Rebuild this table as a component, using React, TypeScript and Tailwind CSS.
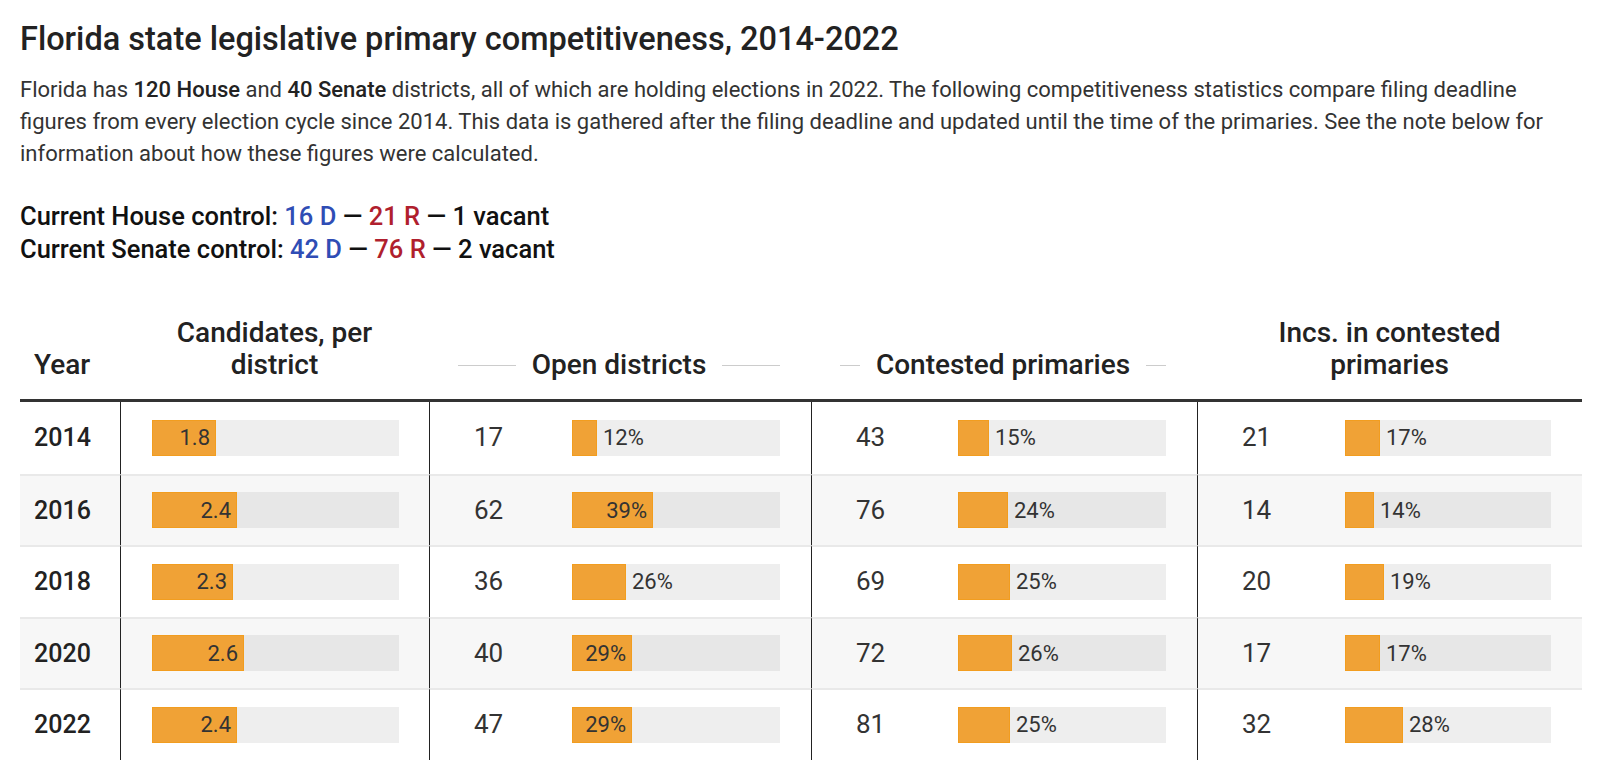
import React from "react";

type Pair = [number, number];

const years = [2014, 2016, 2018, 2020, 2022];
const cand = [1.8, 2.4, 2.3, 2.6, 2.4];
const open: Pair[] = [[17, 12], [62, 39], [36, 26], [40, 29], [47, 29]];
const contested: Pair[] = [[43, 15], [76, 24], [69, 25], [72, 26], [81, 25]];
const incs: Pair[] = [[21, 17], [14, 14], [20, 19], [17, 17], [32, 28]];

const FONT = { fontFamily: "Roboto, 'Liberation Sans', sans-serif" };

function Bar({ frac, label, track, shaded }: { frac: number; label: string; track: number; shaded: boolean }) {
  const w = Math.round(frac * track);
  const inside = w >= 60;
  return (
    <div
      className={`flex items-center h-[36px] shrink-0 ${shaded ? "bg-[#e7e7e7]" : "bg-[#eeeeee]"}`}
      style={{ width: track }}
    >
      <div
        className="h-full bg-[#f0a236] border border-[#f29d1f] flex items-center justify-end pr-[5px] shrink-0"
        style={{ width: w }}
      >
        {inside && <span className="text-[22px] text-[#333]">{label}</span>}
      </div>
      {!inside && <span className="ml-[6px] text-[22px] text-[#333]">{label}</span>}
    </div>
  );
}

function NumBar({ p, track, shaded }: { p: Pair; track: number; shaded: boolean }) {
  return (
    <div className="flex items-center justify-between h-full pl-[44px] pr-[31px]">
      <span className="text-[26px] text-[#333]">{p[0]}</span>
      <Bar frac={p[1] / 100} label={`${p[1]}%`} track={track} shaded={shaded} />
    </div>
  );
}

function Spanner({ text }: { text: string }) {
  return (
    <div className="flex items-center gap-[16px] pl-[29px] pr-[31px]">
      <div className="flex-1 h-px bg-[#cccccc]" />
      <span>{text}</span>
      <div className="flex-1 h-px bg-[#cccccc]" />
    </div>
  );
}

export default function App() {
  return (
    <div className="bg-white w-[1600px] h-[778px] overflow-hidden pl-[20px] pt-[21px] text-[#222]" style={FONT}>
      <h1 className="text-[32.5px] leading-[36px] font-medium text-[#222]">
        Florida state legislative primary competitiveness, 2014-2022
      </h1>
      <p className="mt-[17px] text-[22px] leading-[32px] text-[#333] w-[1565px]">
        Florida has <span className="font-medium text-[#222]">120 House</span> and{" "}
        <span className="font-medium text-[#222]">40 Senate</span> districts, all of which are holding elections in
        2022. The following competitiveness statistics compare filing deadline figures from every election cycle since
        2014. This data is gathered after the filing deadline and updated until the time of the primaries. See the note
        below for information about how these figures were calculated.
      </p>
      <div className="mt-[30px] text-[25.5px] leading-[33px] font-medium text-[#111]">
        <div>
          Current House control: <span className="text-[#2f4db5]">16 D</span> —{" "}
          <span className="text-[#b01f2e]">21 R</span> — 1 vacant
        </div>
        <div>
          Current Senate control: <span className="text-[#2f4db5]">42 D</span> —{" "}
          <span className="text-[#b01f2e]">76 R</span> — 2 vacant
        </div>
      </div>

      <div className="mt-[51px] w-[1562px]">
        <div className="grid grid-cols-[100px_309px_382px_386px_385px] items-end pb-[18px] border-b-[3px] border-[#333] text-[28px] leading-[32px] font-medium text-[#222]">
          <div className="pl-[14px]">Year</div>
          <div className="text-center">
            Candidates, per
            <br />
            district
          </div>
          <Spanner text="Open districts" />
          <Spanner text="Contested primaries" />
          <div className="text-center">
            Incs. in contested
            <br />
            primaries
          </div>
        </div>
        {years.map((y, i) => {
          const shaded = i % 2 === 1;
          const cell = `h-full border-l border-[#222] ${i > 0 ? "border-t-2 border-t-[#e9e9e9]" : ""}`;
          return (
            <div
              key={y}
              className={`grid grid-cols-[100px_309px_382px_386px_385px] h-[71.5px] ${
                shaded ? "bg-[#f7f7f7]" : "bg-white"
              }`}
            >
              <div
                className={`flex items-center pl-[14px] text-[25px] font-medium text-[#222] ${
                  i > 0 ? "border-t-2 border-t-[#e9e9e9]" : ""
                }`}
              >
                {y}
              </div>
              <div className={`${cell} flex items-center pl-[31px]`}>
                <Bar frac={cand[i] / 7} label={cand[i].toFixed(1)} track={247} shaded={shaded} />
              </div>
              <div className={cell}>
                <NumBar p={open[i]} track={208} shaded={shaded} />
              </div>
              <div className={cell}>
                <NumBar p={contested[i]} track={208} shaded={shaded} />
              </div>
              <div className={cell}>
                <NumBar p={incs[i]} track={206} shaded={shaded} />
              </div>
            </div>
          );
        })}
      </div>
    </div>
  );
}
